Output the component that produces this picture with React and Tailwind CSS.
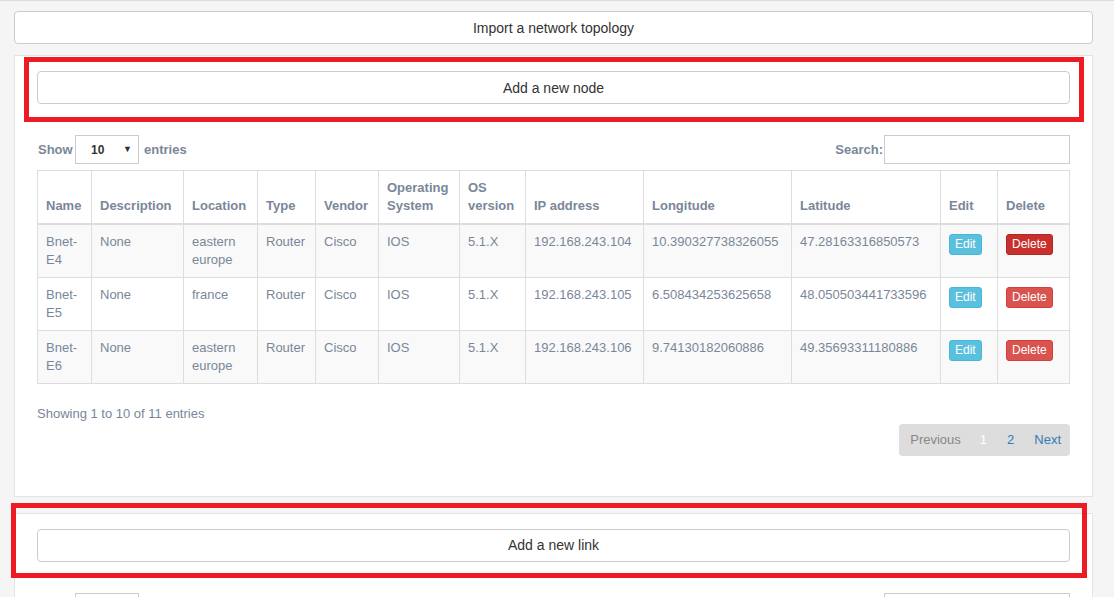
const rows = [
  { name: "Bnet-E4", desc: "None", loc: "eastern europe", type: "Router", vendor: "Cisco", os: "IOS", ver: "5.1.X", ip: "192.168.243.104", lng: "10.390327738326055", lat: "47.28163316850573", active: true },
  { name: "Bnet-E5", desc: "None", loc: "france", type: "Router", vendor: "Cisco", os: "IOS", ver: "5.1.X", ip: "192.168.243.105", lng: "6.508434253625658", lat: "48.050503441733596" },
  { name: "Bnet-E6", desc: "None", loc: "eastern europe", type: "Router", vendor: "Cisco", os: "IOS", ver: "5.1.X", ip: "192.168.243.106", lng: "9.74130182060886", lat: "49.35693311180886" },
];

const cols = [
  ["Name", "w-[54px]"],
  ["Description", "w-[92px]"],
  ["Location", "w-[74px]"],
  ["Type", "w-[58px]"],
  ["Vendor", "w-[63px]"],
  ["Operating System", "w-[81px]"],
  ["OS version", "w-[66px]"],
  ["IP address", "w-[118px]"],
  ["Longitude", "w-[148px]"],
  ["Latitude", "w-[149px]"],
  ["Edit", "w-[57px]"],
  ["Delete", "w-[72px]"],
];

function WideButton({ children }) {
  return (
    <button className="flex h-[33px] w-full items-center justify-center rounded-[4px] border border-[#cccccc] bg-white pt-px text-[14px] text-[#333333]">
      {children}
    </button>
  );
}

function LengthRow({ labels = true }) {
  return (
    <div className="flex h-[29px] items-center justify-between text-[13px] font-bold text-[#7a8799]">
      <div className="flex items-center">
        <span className="ml-px w-[34px]">{labels && "Show"}</span>
        <div className="ml-[3px] flex h-[29px] w-[64px] items-center justify-between border border-[#cccccc] bg-white pl-[15px] pr-[6px] text-[12px] text-[#333333]">
          {labels && <span>10</span>}
          {labels && <span className="text-[9px]">▼</span>}
        </div>
        {labels && <span className="ml-[5px]">entries</span>}
      </div>
      <div className="flex items-center">
        {labels && <span>Search:</span>}
        <div className="ml-px h-[29px] w-[186px] border border-[#cccccc] bg-white" />
      </div>
    </div>
  );
}

function NodeTable() {
  const td = "border border-[#dddddd] px-[8px] pt-[8px] pb-[8px] align-top";
  return (
    <table className="mt-[6px] w-full table-fixed border-collapse text-[13px] leading-[18px] text-[#7a8799]">
      <colgroup>
        {cols.map(([n, w]) => (
          <col key={n} className={w} />
        ))}
      </colgroup>
      <thead>
        <tr className="h-[53px] bg-white">
          {cols.map(([n]) => (
            <th key={n} className="border border-b-2 border-[#dddddd] px-[8px] pb-[8px] text-left align-bottom font-bold">
              {n}
            </th>
          ))}
        </tr>
      </thead>
      <tbody>
        {rows.map((r, i) => (
          <tr key={r.name} className={i % 2 === 0 ? "h-[53px] bg-[#f9f9f9]" : "h-[53px] bg-white"}>
            <td className={td}>{r.name.replace("-", "-\u200b")}</td>
            <td className={td}>{r.desc}</td>
            <td className={td}>{r.loc}</td>
            <td className={td}>{r.type}</td>
            <td className={td}>{r.vendor}</td>
            <td className={td}>{r.os}</td>
            <td className={td}>{r.ver}</td>
            <td className={td}>{r.ip}</td>
            <td className={td}>{r.lng}</td>
            <td className={td}>{r.lat}</td>
            <td className={td}>
              <span className="mt-px inline-flex h-[21px] items-center rounded-[3px] border border-[#46b8da] bg-[#5bc0de] px-[5px] text-[12px] text-white">
                Edit
              </span>
            </td>
            <td className={td}>
              <span
                className={
                  r.active
                    ? "mt-px inline-flex h-[21px] items-center rounded-[3px] border border-[#ac2925] bg-[#c9302c] px-[5px] text-[12px] text-white"
                    : "mt-px inline-flex h-[21px] items-center rounded-[3px] border border-[#d43f3a] bg-[#d9534f] px-[5px] text-[12px] text-white"
                }
              >
                Delete
              </span>
            </td>
          </tr>
        ))}
      </tbody>
    </table>
  );
}

function Pagination() {
  return (
    <div className="flex justify-end">
      <div className="flex h-[32px] items-center rounded-[4px] bg-[#dddddd] text-[13px]">
        <span className="pl-[11px] pr-[9px] text-[#888888]">Previous</span>
        <span className="px-[10px] text-white">1</span>
        <span className="px-[10px] text-[#337ab7]">2</span>
        <span className="pl-[10px] pr-[9px] text-[#337ab7]">Next</span>
      </div>
    </div>
  );
}

export default function App() {
  return (
    <div className="relative h-[597px] w-[1114px] overflow-hidden border-t border-[#d9dee5] bg-[#f5f5f5] font-['Liberation_Sans',Arial,sans-serif]">
      <div className="ml-[14px] w-[1079px] pt-[10px]">
        <WideButton>Import a network topology</WideButton>

        <div className="mt-[11px] border border-[#e3e3e3] bg-white px-[22px] pt-[15px] pb-[40px]">
          <WideButton>Add a new node</WideButton>
          <div className="mt-[31px]">
            <LengthRow />
          </div>
          <NodeTable />
          <div className="mt-[20px] h-[20px] text-[13px] leading-[20px] text-[#7a8799]">
            Showing 1 to 10 of 11 entries
          </div>
          <Pagination />
        </div>

        <div className="mt-[16px] border border-[#e3e3e3] bg-white px-[22px] pt-[15px] pb-[40px]">
          <WideButton>Add a new link</WideButton>
          <div className="mt-[31px]">
            <LengthRow labels={false} />
          </div>
        </div>
      </div>

      <div className="pointer-events-none absolute left-[24px] top-[56px] h-[65px] w-[1060px] border-[5px] border-[#ed1c24]" />
      <div className="pointer-events-none absolute left-[11px] top-[502px] h-[75px] w-[1076px] border-[5px] border-[#ed1c24]" />
    </div>
  );
}
